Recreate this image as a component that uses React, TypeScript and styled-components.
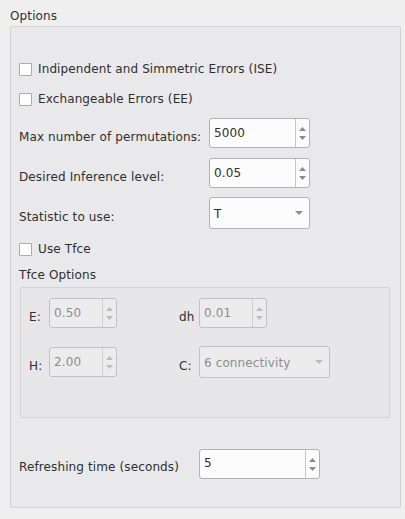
import React, {FC} from 'react';
import styled, {createGlobalStyle} from "styled-components";

const GlobalStyle = createGlobalStyle`
    html, body {
        margin: 0;
        padding: 0;
        background: #efeff0;
    }
    body {
        font-family: "DejaVu Sans", "Liberation Sans", sans-serif;
        font-size: 12px;
        letter-spacing: 0.12px;
        color: #2f2f2f;
    }
`;

const Page = styled.div`
    width: 405px;
    height: 519px;
    padding: 9px 0 0 10px;
    box-sizing: border-box;
`;

const Title = styled.div`
    height: 16px;
    line-height: 14px;
`;

const Group = styled.div<{$w: number; $h: number}>`
    width: ${({$w}) => $w}px;
    height: ${({$h}) => $h}px;
    box-sizing: border-box;
    border: 1px solid #d3d3d5;
    border-radius: 2px;
    background: #e9e9eb;
    display: flex;
    flex-direction: column;
`;

const OuterGroup = styled(Group)`
    margin-top: 1px;
    padding: 33px 8px 0 8px;
`;

const InnerGroup = styled(Group)`
    margin: 3px 0 0 1px;
    padding: 10px 0 0 8px;
    background: #e7e7e9;
`;

const Row = styled.div<{$mt: number; $h: number}>`
    display: flex;
    align-items: center;
    margin-top: ${({$mt}) => $mt}px;
    height: ${({$h}) => $h}px;
`;

const Box = styled.span`
    width: 13px;
    height: 13px;
    box-sizing: border-box;
    border: 1px solid #ababad;
    border-radius: 1px;
    background: #fdfdfd;
    margin-right: 6px;
    flex: none;
`;

const Label = styled.span<{$w?: number}>`
    width: ${({$w}) => ($w ? `${$w}px` : 'auto')};
    flex: none;
    padding-top: 7px;
    white-space: nowrap;
`;

const Field = styled.div<{$w: number; $h: number; $off?: boolean}>`
    width: ${({$w}) => $w}px;
    height: ${({$h}) => $h}px;
    box-sizing: border-box;
    border: 1px solid ${({$off}) => ($off ? '#c2c2c4' : '#b3b3b5')};
    border-radius: 3px;
    background: ${({$off}) => ($off ? '#ececed' : '#fcfcfc')};
    color: ${({$off}) => ($off ? '#8e8e90' : '#2f2f2f')};
    display: flex;
    flex: none;
`;

const Value = styled.div<{$drop?: number}>`
    flex: 1;
    display: flex;
    align-items: center;
    padding: ${({$drop}) => $drop ?? 0}px 0 1px 4px;
`;

const Buttons = styled.div<{$off?: boolean}>`
    width: 13px;
    border-left: 1px solid ${({$off}) => ($off ? '#cfcfd1' : '#c4c4c6')};
    display: flex;
    flex-direction: column;
    align-items: center;
    justify-content: space-between;
    padding: 8px 0 7px 0;
`;

const Arrow = styled.svg<{$off?: boolean}>`
    display: block;
    fill: ${({$off}) => ($off ? '#bdbdbf' : '#8c8c8e')};
`;

const ComboArrow = styled.div`
    width: 21px;
    display: flex;
    align-items: center;
    justify-content: center;
`;

const TfceGrid = styled.div`
    display: grid;
    grid-template-columns: 20px 130px 20px auto;
    grid-auto-rows: 32px;
    row-gap: 17px;
    align-items: center;
    margin-top: -1px;
`;

type SpinProps = {value: string; w: number; off?: boolean};

const Spin: FC<SpinProps> = ({value, w, off}) => (
    <Field $w={w} $h={30} $off={off}>
        <Value>{value}</Value>
        <Buttons $off={off}>
            <Arrow $off={off} width="7" height="4" viewBox="0 0 7 4"><path d="M0 4 L3.5 0 L7 4 Z" /></Arrow>
            <Arrow $off={off} width="7" height="4" viewBox="0 0 7 4"><path d="M0 0 L7 0 L3.5 4 Z" /></Arrow>
        </Buttons>
    </Field>
);

const Combo: FC<SpinProps> = ({value, w, off}) => (
    <Field $w={w} $h={32} $off={off}>
        <Value $drop={2}>{value}</Value>
        <ComboArrow>
            <Arrow $off={off} width="8" height="4" viewBox="0 0 8 4"><path d="M0 0 L8 0 L4 4 Z" /></Arrow>
        </ComboArrow>
    </Field>
);

const Check: FC<{text: string; mt: number}> = ({text, mt}) => (
    <Row $mt={mt} $h={18}>
        <Box />
        <span>{text}</span>
    </Row>
);

const App: FC = () => {
    return (
        <Page>
            <GlobalStyle />
            <Title>Options</Title>
            <OuterGroup $w={391} $h={482}>
                <Check text="Indipendent and Simmetric Errors (ISE)" mt={0} />
                <Check text="Exchangeable Errors (EE)" mt={12} />
                <Row $mt={10} $h={30}>
                    <Label $w={190}>Max number of permutations:</Label>
                    <Spin value="5000" w={101} />
                </Row>
                <Row $mt={10} $h={30}>
                    <Label $w={190}>Desired Inference level:</Label>
                    <Spin value="0.05" w={101} />
                </Row>
                <Row $mt={9} $h={32}>
                    <Label $w={190}>Statistic to use:</Label>
                    <Combo value="T" w={101} />
                </Row>
                <Check text="Use Tfce" mt={11} />
                <Row $mt={8} $h={18}>
                    <span>Tfce Options</span>
                </Row>
                <InnerGroup $w={370} $h={131}>
                    <TfceGrid>
                        <Label>E:</Label>
                        <Spin value="0.50" w={68} off />
                        <Label>dh</Label>
                        <Spin value="0.01" w={68} off />
                        <Label>H:</Label>
                        <Spin value="2.00" w={68} off />
                        <Label>C:</Label>
                        <Combo value="6 connectivity" w={131} off />
                    </TfceGrid>
                </InnerGroup>
                <Row $mt={30} $h={31}>
                    <Label $w={180}>Refreshing time (seconds)</Label>
                    <Spin value="5" w={121} />
                </Row>
            </OuterGroup>
        </Page>
    );
};

export default App;
